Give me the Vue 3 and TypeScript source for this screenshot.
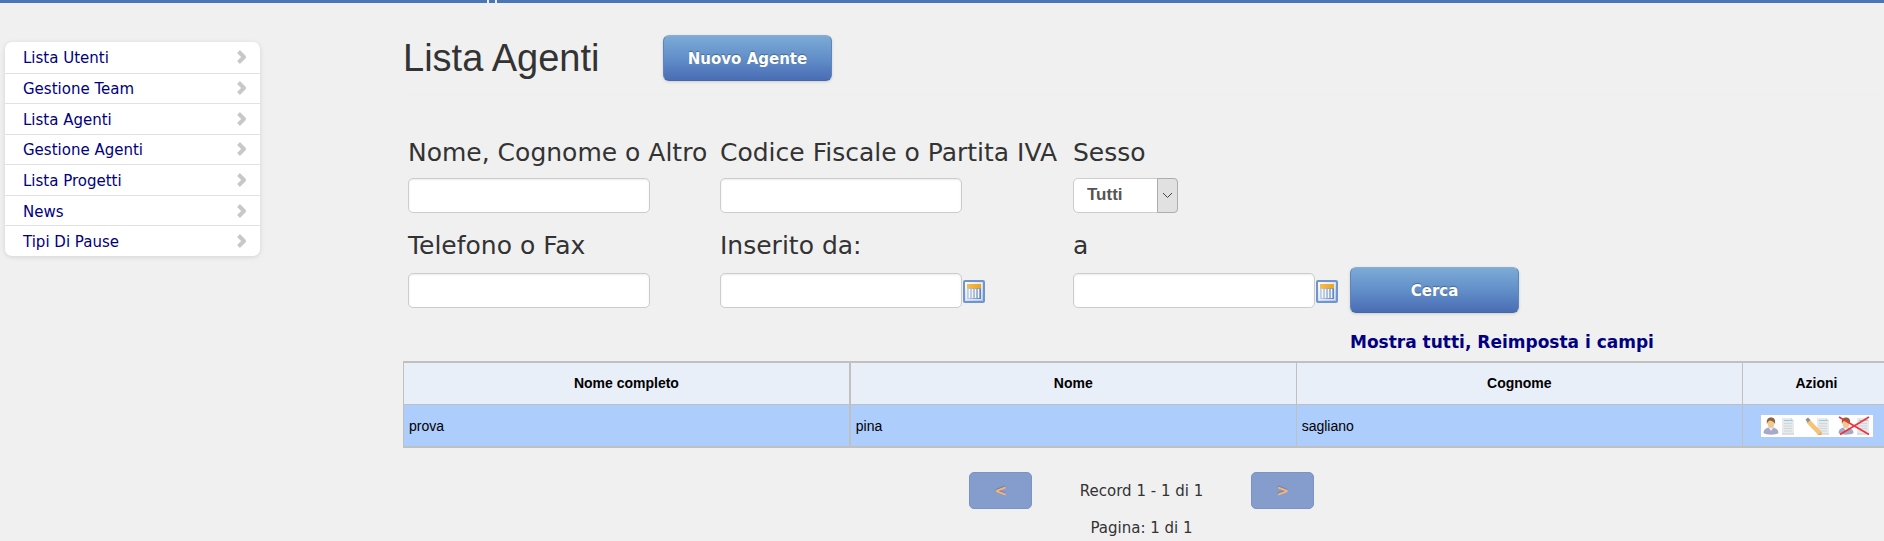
<script setup lang="ts">
import { ref } from 'vue'

interface Agent {
  id: number
  fullName: string
  firstName: string
  lastName: string
}

const menu: string[] = [
  'Lista Utenti',
  'Gestione Team',
  'Lista Agenti',
  'Gestione Agenti',
  'Lista Progetti',
  'News',
  'Tipi Di Pause',
]

const agents: Agent[] = [
  { id: 1, fullName: 'prova', firstName: 'pina', lastName: 'sagliano' },
]

const name = ref('')
const taxCode = ref('')
const gender = ref('Tutti')
const phone = ref('')
const from = ref('')
const to = ref('')

function reset(): void {
  name.value = ''
  taxCode.value = ''
  gender.value = 'Tutti'
  phone.value = ''
  from.value = ''
  to.value = ''
}
</script>

<template>
  <div class="page">
    <svg class="defs" width="0" height="0" aria-hidden="true">
      <defs>
        <linearGradient id="cal-bg" x1="0" y1="0" x2="1" y2="1">
          <stop offset="0" stop-color="#ffffff" />
          <stop offset="1" stop-color="#a9c2e8" />
        </linearGradient>
        <linearGradient id="cal-head" x1="0" y1="0" x2="1" y2="0">
          <stop offset="0" stop-color="#f6bb52" />
          <stop offset="1" stop-color="#eba51f" />
        </linearGradient>
        <linearGradient id="cal-line" x1="0" y1="0" x2="1" y2="0">
          <stop offset="0" stop-color="#c3d1e6" />
          <stop offset="1" stop-color="#5c82be" />
        </linearGradient>
        <symbol id="calendar" viewBox="0 0 22 23">
          <rect x="1" y="1" width="20" height="21" rx="1" fill="url(#cal-bg)" stroke="#7094cb" stroke-width="2" />
          <rect x="3" y="3" width="16" height="17" fill="#fff" opacity="0.4" />
          <rect x="4" y="8" width="14" height="11" fill="url(#cal-line)" />
          <path d="M6.5 9v9M9.5 9v9M12.5 9v9M15.5 9v9" stroke="#f4f7fc" stroke-width="1.6" />
          <rect x="4" y="4" width="14" height="4.5" fill="url(#cal-head)" />
        </symbol>
        <symbol id="person" viewBox="0 0 16 18">
          <path d="M0.5 16C0.5 12.500 3 11 6 10.500L10 10.500C13 11 15.500 13 15.500 16C13 18.200 3 18.200 0.5 16Z" fill="#a6a9c9" />
          <path d="M5.500 10.500L8 14L10.500 10.500Z" fill="#edf0f7" />
          <ellipse cx="8" cy="6.500" rx="3.300" ry="4.500" fill="#efc991" />
          <path d="M4 7C3 2 5.500 0.500 8 0.500C11 0.500 12.800 2.500 12 7C11 4.500 9 3.800 6.500 3.500C5.600 4.300 4.500 5 4 7Z" fill="#8a6338" />
        </symbol>
        <symbol id="sheet" viewBox="0 0 14 18">
          <path d="M1 1H10L13 4V17.500H1Z" fill="#e7e9ea" />
          <path d="M10 1L13 4H10Z" fill="#cfd3d5" />
          <path d="M1 17H13" stroke="#c9ccce" />
          <path d="M3 3.500H11" stroke="#8fcfe2" />
          <path d="M3 6.500H11M3 9H11M3 11.500H11M3 14H11" stroke="#cfd8dc" />
        </symbol>
      </defs>
    </svg>

    <header class="topbar"><span class="notch"></span></header>

    <div class="layout">
      <nav class="sidebar">
        <ul>
          <li v-for="item in menu" :key="item">
            <a href="#">
              <span>{{ item }}</span>
              <svg width="12" height="16" viewBox="0 0 12 16" aria-hidden="true">
                <path d="M2.500 2.500L8 8L2.500 13.500" fill="none" stroke="#c8c8c8" stroke-width="4" stroke-linejoin="round" />
              </svg>
            </a>
          </li>
        </ul>
      </nav>

      <main>
        <div class="heading">
          <h1>Lista Agenti</h1>
          <button type="button" class="primary">Nuovo Agente</button>
        </div>

        <form class="filters" @submit.prevent>
          <label for="name">Nome, Cognome o Altro</label>
          <label for="tax">Codice Fiscale o Partita IVA</label>
          <label for="gender" class="wide">Sesso</label>

          <div class="field"><input id="name" v-model="name" type="text" /></div>
          <div class="field"><input id="tax" v-model="taxCode" type="text" /></div>
          <div class="field wide">
            <span class="select">
              <select id="gender" v-model="gender">
                <option>Tutti</option>
                <option>M</option>
                <option>F</option>
              </select>
              <span class="arrow">
                <svg width="11" height="7" viewBox="0 0 11 7" aria-hidden="true">
                  <path d="M1 1L5.500 5.500L10 1" fill="none" stroke="#444" />
                </svg>
              </span>
            </span>
          </div>

          <label for="phone">Telefono o Fax</label>
          <label for="from">Inserito da:</label>
          <label for="to" class="wide">a</label>

          <div class="field"><input id="phone" v-model="phone" type="text" /></div>
          <div class="field">
            <input id="from" v-model="from" type="text" />
            <button type="button" class="cal" aria-label="Scegli data iniziale">
              <svg width="22" height="23"><use href="#calendar" /></svg>
            </button>
          </div>
          <div class="field">
            <input id="to" v-model="to" type="text" />
            <button type="button" class="cal" aria-label="Scegli data finale">
              <svg width="22" height="23"><use href="#calendar" /></svg>
            </button>
          </div>
          <div class="field"><button type="submit" class="primary">Cerca</button></div>

          <a href="#" class="reset" @click.prevent="reset">Mostra tutti, Reimposta i campi</a>
        </form>

        <table class="agents">
          <thead>
            <tr>
              <th scope="col">Nome completo</th>
              <th scope="col">Nome</th>
              <th scope="col">Cognome</th>
              <th scope="col" class="actions-col">Azioni</th>
            </tr>
          </thead>
          <tbody>
            <tr v-for="agent in agents" :key="agent.id">
              <td>{{ agent.fullName }}</td>
              <td>{{ agent.firstName }}</td>
              <td>{{ agent.lastName }}</td>
              <td>
                <div class="actions">
                  <button type="button" aria-label="Visualizza">
                    <svg width="38" height="22" viewBox="0 0 38 22">
                      <use href="#person" x="2" y="2" width="16" height="18" />
                      <use href="#sheet" x="20" y="2" width="14" height="18" />
                    </svg>
                  </button>
                  <button type="button" aria-label="Modifica">
                    <svg width="27" height="22" viewBox="0 0 27 22">
                      <use href="#sheet" x="11" y="2" width="14" height="18" />
                      <path d="M3 6L15 18.500" stroke="#f5c373" stroke-width="4.500" />
                      <path d="M0.500 4.500L3 2.500L5.500 5L2.500 7.500Z" fill="#8b8f96" />
                      <path d="M13 20L16.500 16.500L16.500 20Z" fill="#dba866" />
                    </svg>
                  </button>
                  <button type="button" aria-label="Elimina">
                    <svg width="34" height="22" viewBox="0 0 34 22">
                      <use href="#person" x="0" y="2" width="16" height="18" />
                      <use href="#sheet" x="18" y="2" width="14" height="18" />
                      <path d="M1 2L31 19.500M31 2L2 19.500" stroke="#f52f38" stroke-width="1.600" />
                    </svg>
                  </button>
                </div>
              </td>
            </tr>
          </tbody>
        </table>

        <div class="pager">
          <button type="button" disabled>&lt;</button>
          <span>Record 1 - 1 di 1</span>
          <button type="button" disabled>&gt;</button>
        </div>
        <p class="page-count">Pagina: 1 di 1</p>
      </main>
    </div>
  </div>
</template>

<style>
body {
  margin: 0;
  background: #f0f0f0;
}
</style>

<style scoped>
* {
  box-sizing: border-box;
}
.page {
  min-height: 100vh;
  overflow: hidden;
  background: #f0f0f0;
  color: #333;
  font: 15px/20px Verdana, "DejaVu Sans", sans-serif;
}
.defs {
  position: absolute;
}
.topbar {
  height: 3px;
  background: #4a76b8;
}
.notch {
  display: block;
  width: 10px;
  height: 3px;
  margin-left: 487px;
  border: solid #f0f0f0;
  border-width: 0 2px;
}
.layout {
  display: grid;
  grid-template-columns: 255px minmax(0, 1fr);
  column-gap: 143px;
  align-items: start;
  padding: 0 4px 0 5px;
}
.sidebar {
  margin-top: 39px;
  border-radius: 7px;
  background: #fff;
  box-shadow: 0 1px 5px rgba(0, 0, 0, 0.12);
}
.sidebar ul {
  display: grid;
  grid-auto-rows: 1fr;
  height: 214px;
  margin: 0;
  padding: 0;
  list-style: none;
}
.sidebar li + li {
  border-top: 1px solid #e2e2e2;
}
.sidebar a {
  display: flex;
  justify-content: space-between;
  align-items: center;
  height: 100%;
  padding: 0 12px 0 18px;
  color: #000080;
  text-decoration: none;
}
.sidebar span {
  padding-top: 2px;
}
.heading {
  display: flex;
  align-items: center;
  gap: 64px;
  height: 92px;
  padding: 20px 0 2px;
  border-bottom: 1px solid #eee;
}
h1 {
  width: 196px;
  margin: 0;
  font: 38px/40px "Liberation Sans", Arial, sans-serif;
  white-space: nowrap;
}
.primary {
  width: 169px;
  height: 46px;
  padding: 2px 0 0;
  border: 1px solid;
  border-color: #8fabcf #5f84ba #4967a5;
  border-radius: 6px;
  background: linear-gradient(#7cabd6, #628fc9 50%, #4a6db4);
  box-shadow: 0 1px 3px rgba(0, 0, 0, 0.15);
  color: #fff;
  font: bold 15px/20px Verdana, "DejaVu Sans", sans-serif;
  text-shadow: 0 -1px 1px rgba(0, 0, 0, 0.3);
}
.filters {
  display: grid;
  grid-template-columns: 302px 343px 267px auto;
  grid-template-rows: 39px 46px 47px 50px 46px;
  column-gap: 10px;
  justify-content: start;
  align-items: center;
  padding: 38px 5px 0;
}
.filters label {
  align-self: end;
  font-size: 25px;
  line-height: 38px;
  white-space: nowrap;
}
.wide {
  grid-column: 3 / 5;
}
.field {
  display: flex;
  align-items: center;
}
.field input {
  width: 242px;
  height: 35px;
  padding: 4px 6px;
  border: 1px solid #ccc;
  border-radius: 5px;
  background: #fff;
  box-shadow: inset 0 1px 2px rgba(0, 0, 0, 0.08);
  color: #555;
  font: 17px/24px "Liberation Sans", Arial, sans-serif;
}
.cal {
  display: flex;
  margin: 2px 0 0 1px;
  padding: 0;
  border: 0;
  background: none;
}
.select {
  position: relative;
  display: block;
  width: 105px;
}
.select select {
  display: block;
  width: 100%;
  height: 35px;
  padding: 0 24px 0 13px;
  border: 1px solid #ccc;
  border-radius: 5px;
  background: #fff;
  color: #555;
  font: bold 17px/24px "Liberation Sans", Arial, sans-serif;
  appearance: none;
}
.arrow {
  position: absolute;
  top: 0;
  right: 0;
  bottom: 0;
  display: flex;
  align-items: center;
  justify-content: center;
  width: 21px;
  border: 1px solid #adadad;
  border-radius: 0 4px 4px 0;
  background: #e1e1e1;
  pointer-events: none;
}
.reset {
  grid-column: 4;
  padding-top: 8px;
  color: #000080;
  font-size: 17px;
  font-weight: bold;
  text-decoration: none;
  white-space: nowrap;
}
.agents {
  width: calc(100% + 11px);
  border: solid #c0c0c0;
  border-width: 2px 1px;
  border-collapse: collapse;
  table-layout: fixed;
  color: #000;
  font: 14px/20px "Liberation Sans", Arial, sans-serif;
}
.agents th,
.agents td {
  height: 43px;
  padding: 0 5px;
  border: 1px solid #c0c0c0;
}
.agents th {
  height: 42px;
  background: #e8eff8;
}
.agents td {
  padding-top: 2px;
  background: #adcdfc;
}
.agents th:first-child,
.agents td:first-child {
  border-right-width: 2px;
}
.actions-col {
  width: 148px;
}
.actions {
  display: flex;
  gap: 6px;
  width: 112px;
  margin: 0 auto;
  background: #fff;
}
.actions button {
  display: flex;
  padding: 0;
  border: 0;
  background: none;
}
.pager {
  display: flex;
  justify-content: center;
  align-items: center;
  margin-top: 24px;
}
.pager span {
  width: 219px;
  text-align: center;
}
.pager button {
  width: 63px;
  height: 37px;
  border: 1px solid #7b93c2;
  border-radius: 5px;
  background: #859dcc;
  color: #f3b377;
  font: bold 15px/20px Verdana, "DejaVu Sans", sans-serif;
  text-shadow: 0 -1px 1px rgba(0, 0, 0, 0.2);
}
.page-count {
  margin: 9px 0 0;
  text-align: center;
}
</style>
